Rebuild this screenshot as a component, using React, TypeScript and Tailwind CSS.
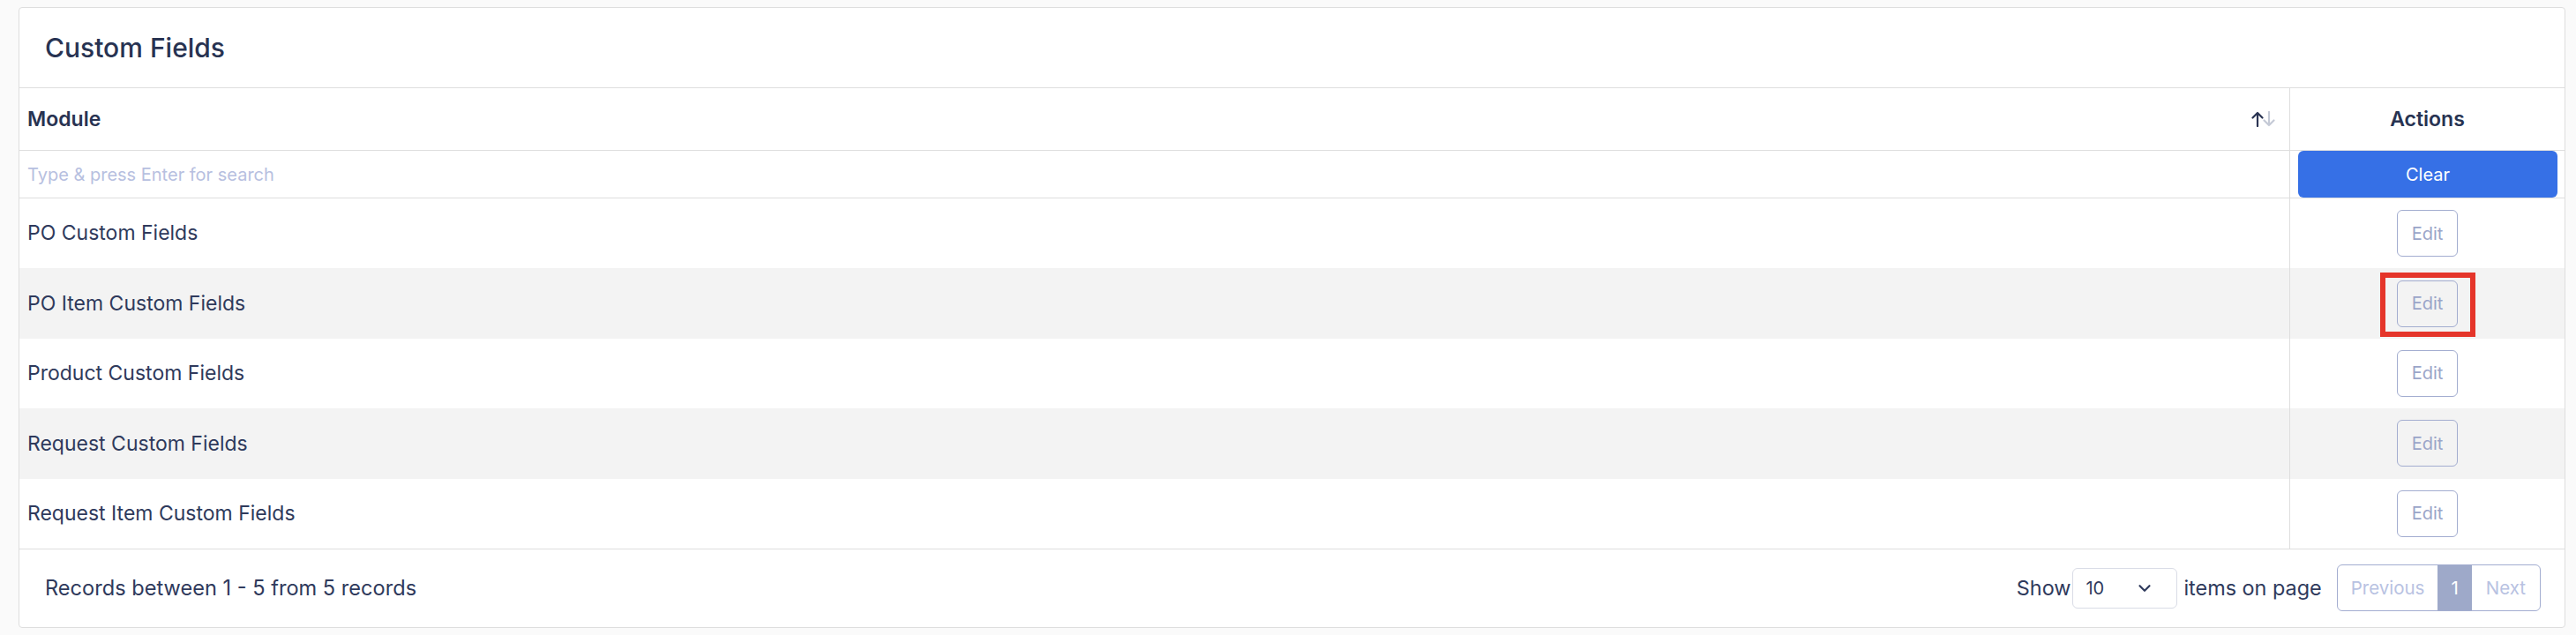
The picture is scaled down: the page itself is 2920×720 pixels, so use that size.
import { ChevronDown } from "lucide-react";

const rows = [
  "PO Custom Fields",
  "PO Item Custom Fields",
  "Product Custom Fields",
  "Request Custom Fields",
  "Request Item Custom Fields",
];

function SortIcon() {
  return (
    <svg width="28" height="18" viewBox="0 0 28 18" fill="none" strokeWidth="2.2" strokeLinecap="round" strokeLinejoin="round">
      <path d="M7 17V2M1.5 7.5L7 2l5.5 5.5" stroke="#2b3553" />
      <path d="M20 1v15M14.5 10.5L20 16l5.5-5.5" stroke="#c5cad6" />
    </svg>
  );
}

function EditButton({ marked }: { marked?: boolean }) {
  return (
    <div className="relative">
      <button className="w-[69px] h-[53px] rounded-[6px] border border-[#a3add0] bg-transparent text-[20px] text-[#9ba5c9]">
        Edit
      </button>
      {marked && (
        <div className="pointer-events-none absolute -left-[19px] -right-[20px] -top-[9px] -bottom-[11px] border-[6px] border-[#e5352a]" />
      )}
    </div>
  );
}

export default function App() {
  return (
    <div className="min-h-screen bg-[#fafafa] pt-[8px] pl-[21px] pr-[12px] font-['Inter',sans-serif] text-[#2f3a5c]">
      <div className="rounded-[4px] border border-[#dedede] bg-white overflow-hidden">
        <div className="h-[91px] border-b border-[#dedede] flex items-center px-[29px]">
          <h1 className="text-[30px] font-medium text-[#283352]">Custom Fields</h1>
        </div>

        <div className="grid grid-cols-[1fr_312px] h-[71px] border-b border-[#dedede]">
          <div className="flex items-center justify-between pl-[9px] pr-[15px]">
            <span className="text-[23px] font-semibold text-[#283352]">Module</span>
            <SortIcon />
          </div>
          <div className="flex items-center justify-center border-l border-[#dedede]">
            <span className="text-[23px] font-semibold text-[#283352]">Actions</span>
          </div>
        </div>

        <div className="grid grid-cols-[1fr_312px] h-[54px] border-b border-[#dedede]">
          <div className="flex items-center pl-[9px]">
            <input
              className="w-full bg-transparent text-[20px] outline-none placeholder:text-[#b7c0e0]"
              placeholder="Type & press Enter for search"
            />
          </div>
          <div className="border-l border-[#dedede] pl-[9px] pr-[8px]">
            <button className="w-full h-[53px] rounded-[6px] bg-[#3670e6] text-[20px] text-white">Clear</button>
          </div>
        </div>

        {rows.map((name, i) => (
          <div key={name} className={`grid grid-cols-[1fr_312px] h-[79.4px] ${i % 2 === 1 ? "bg-[#f3f3f3]" : "bg-white"}`}>
            <div className="flex items-center pl-[9px] text-[23px]">{name}</div>
            <div className="flex items-center justify-center border-l border-[#dedede]">
              <EditButton marked={i === 1} />
            </div>
          </div>
        ))}

        <div className="h-[89px] border-t border-[#dedede] flex items-center justify-between pl-[29px] pr-[27px]">
          <span className="text-[23.6px]">Records between 1 - 5 from 5 records</span>
          <div className="flex items-center">
            <span className="text-[23.4px]">Show</span>
            <div className="ml-[2px] w-[119px] h-[46px] rounded-[6px] border border-[#d9dce6] flex items-center justify-between pl-[14px] pr-[25px]">
              <span className="text-[20px]">10</span>
              <ChevronDown size={22} strokeWidth={2.4} color="#2f3a5c" />
            </div>
            <span className="ml-[7px] text-[23.4px]">items on page</span>
            <div className="ml-[17px] h-[53px] flex rounded-[6px] border border-[#a3add0] overflow-hidden text-[20.5px]">
              <span className="flex items-center px-[15px] text-[#b8c2e2]">Previous</span>
              <span className="flex items-center px-[15px] bg-[#9ea9c9] text-white">1</span>
              <span className="flex items-center px-[16px] text-[#b8c2e2]">Next</span>
            </div>
          </div>
        </div>
      </div>
    </div>
  );
}
